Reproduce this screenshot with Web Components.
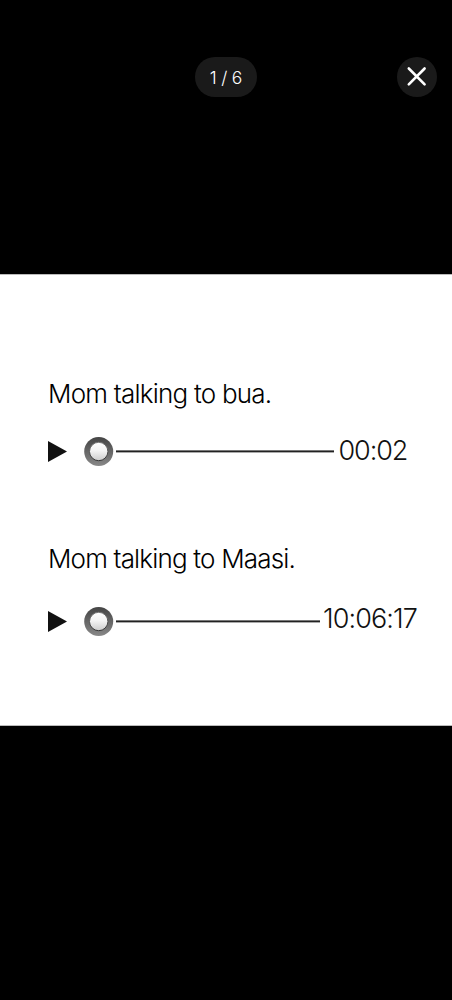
<!DOCTYPE html>
<html lang="en"><head><meta charset="utf-8"><title>Viewer</title>
<style>html,body{margin:0;background:#000}</style></head><body>
<media-viewer>
<top-bar slot="bar" label="1 / 6"></top-bar>
<voice-note time="00:02" style="--track:218px;--space:24px;--gap:4.5px;--ls:-1.1px;--ts:-.77px">Mom talking to bua.</voice-note>
<voice-note time="10:06:17" style="--track:204px;--space:29px;--gap:3px;--ls:-.9px;--lift:4px;--ts:-.82px">Mom talking to Maasi.</voice-note>
</media-viewer>
<script>
customElements.define('media-viewer',class extends HTMLElement{constructor(){super();this.attachShadow({mode:'open'}).innerHTML=`
<style>:host{display:flex;flex-direction:column;width:452px;height:1000px;background:#000;overflow:hidden;font-family:Inter,sans-serif}
header{height:274px;flex:none}main{height:452px;flex:none;background:#fff;border:solid #bbb;border-width:1px 0;box-sizing:border-box;padding:102px 0 0 48px;display:flex;flex-direction:column;gap:75px}</style>
<header><slot name="bar"></slot></header><main><slot></slot></main>`}});
customElements.define('top-bar',class extends HTMLElement{constructor(){super();this.attachShadow({mode:'open'}).innerHTML=`
<style>:host{display:grid;grid-template-columns:1fr 62px 1fr;padding:57px 15px 0 15px;align-items:center;color:#fff}
.p{grid-column:2;height:40px;border-radius:20px;background:#1a1a1a;display:grid;place-items:center;font:350 17.5px Inter,sans-serif;letter-spacing:-.2px;white-space:pre}
.x{justify-self:end;width:40px;height:40px;border-radius:50%;background:#1a1a1a}svg{display:block}</style>
<div class="p"></div><div class="x"><svg width="40" height="40"><path d="M11.800 11.500L27.600 27.300M27.600 11.500L11.800 27.300" stroke="#fff" stroke-width="2.600" stroke-linecap="round"/></svg></div>`;
this.shadowRoot.querySelector('.p').textContent=this.getAttribute('label')}});
customElements.define('voice-note',class extends HTMLElement{constructor(){super();this.attachShadow({mode:'open'}).innerHTML=`
<style>:host{display:block;color:#111}
.t{font-size:26px;font-weight:300;line-height:34px;letter-spacing:var(--ts);white-space:nowrap;color:#000}
.r{display:flex;align-items:center;height:32px;margin-top:var(--space)}
svg{display:block;flex:none}.l{flex:none;width:var(--track);height:3px;background:linear-gradient(#777 1px,#222 1px 2px,#aaa 2px);margin:0 var(--gap) 0 2px}
.d{font-size:27px;font-weight:300;letter-spacing:var(--ls);line-height:32px;padding-bottom:var(--lift,0)}</style>
<div class="t"><slot></slot></div><div class="r"><svg width="66" height="32"><defs><linearGradient id="a" x2="0" y2="1"><stop stop-color="#444"/><stop offset="1" stop-color="#888"/></linearGradient><linearGradient id="b" x2="0" y2="1"><stop stop-color="#fff"/><stop offset=".45" stop-color="#f4f4f4"/><stop offset="1" stop-color="#ccc"/></linearGradient><linearGradient id="c" x2="0" y2="1"><stop stop-color="#777"/><stop offset="1" stop-color="#333"/></linearGradient></defs><path d="M0 6L19 16.500L0 27Z" fill="#111"/><circle cx="50.700" cy="16.500" r="14.500" fill="url(#a)"/><circle cx="50.700" cy="16.500" r="9.200" fill="url(#b)" stroke="url(#c)"/></svg><div class="l"></div><div class="d"></div></div>`;
this.shadowRoot.querySelector('.d').textContent=this.getAttribute('time')}});
</script></body></html>
